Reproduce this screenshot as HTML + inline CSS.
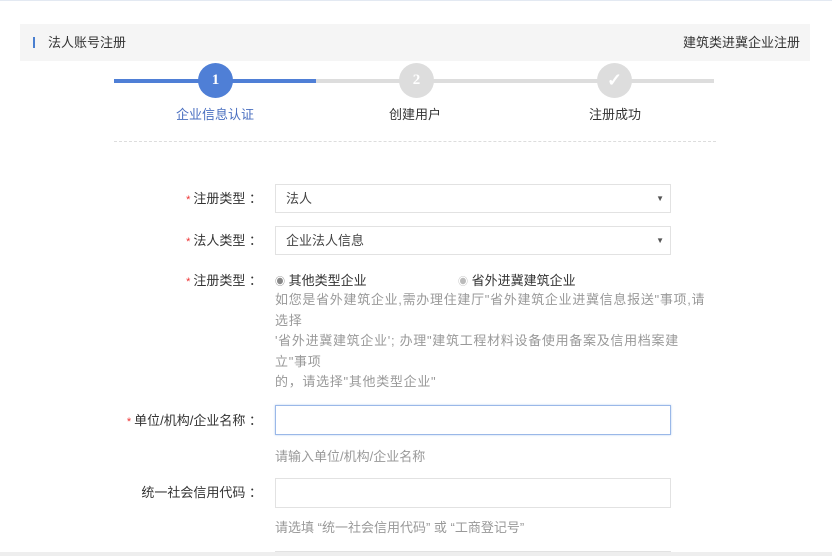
<!DOCTYPE html>
<html><head><meta charset="utf-8"><style>
*{margin:0;padding:0;box-sizing:border-box}
html,body{width:832px;height:556px;overflow:hidden}
body{background:#fff;font-family:"Liberation Sans","Noto Sans CJK SC",sans-serif;font-size:13px;color:#333;position:relative}
.frame{position:absolute;left:0;top:0;width:832px;height:556px;border-top:1px solid #e3e9f2;border-bottom:4px solid #eee;z-index:5}
.hdr{position:absolute;left:20px;top:24px;width:790px;height:37px;background:#f5f5f5}
.hdr .bar{position:absolute;left:13px;top:13px;width:2px;height:11px;background:#4a7fd0}
.hdr .t{position:absolute;left:28px;top:10px;line-height:17px}
.hdr .r{position:absolute;right:10px;top:10px;line-height:17px}
.ln{position:absolute;top:79px;height:4px}
.c{position:absolute;top:63px;width:35px;height:35px;border-radius:50%;background:#ddd;color:#fff;text-align:center;line-height:35px;font-weight:bold;font-size:15px;font-family:"Liberation Serif",serif}
.lab{position:absolute;top:106px;width:120px;text-align:center;line-height:18px}
.dash{position:absolute;left:114px;top:141px;width:602px;border-top:1px dashed #ddd}
.fl{position:absolute;right:570px;line-height:18px;color:#333;white-space:nowrap}
.fl i{color:#e33;font-style:normal;font-size:11px;margin-right:3px}
.sel{position:absolute;left:275px;width:396px;height:29px;border:1px solid #e2e2e2;padding-left:10px;line-height:27px;color:#444}
.sel:after{content:"▼";position:absolute;right:6px;top:0;font-size:8px;color:#555}
.inp{position:absolute;left:275px;width:396px;height:30px;border:1px solid #e2e2e2}
.hint{position:absolute;left:275px;color:#999;line-height:20px;white-space:nowrap}
</style></head><body>
<div class="frame"></div>
<div class="hdr"><div class="bar"></div><div class="t">法人账号注册</div><div class="r">建筑类进冀企业注册</div></div>
<div class="ln" style="left:114px;width:600px;background:#ddd"></div>
<div class="ln" style="left:114px;width:202px;background:#4f7fd6"></div>
<div class="c" style="left:198px;background:#4f7fd6">1</div>
<div class="c" style="left:399px">2</div>
<div class="c" style="left:597px;font-size:18px">✓</div>
<div class="lab" style="left:155px;color:#4a6fc0">企业信息认证</div>
<div class="lab" style="left:355px">创建用户</div>
<div class="lab" style="left:555px">注册成功</div>
<div class="dash"></div>
<div class="fl" style="top:190px"><i>*</i>注册类型 ：</div>
<div class="sel" style="top:184px">法人</div>
<div class="fl" style="top:232px"><i>*</i>法人类型 ：</div>
<div class="sel" style="top:226px">企业法人信息</div>
<div class="fl" style="top:272px"><i>*</i>注册类型 ：</div>
<div style="position:absolute;left:275px;top:272px;line-height:18px"><span style="color:#888;font-size:10px">◉</span> 其他类型企业</div>
<div style="position:absolute;left:458px;top:272px;line-height:18px"><span style="color:#bbb;font-size:10px">◉</span> 省外进冀建筑企业</div>
<div class="hint" style="top:290px;line-height:20.5px;letter-spacing:0.7px">如您是省外建筑企业,需办理住建厅"省外建筑企业进冀信息报送"事项,请<br>选择<br>'省外进冀建筑企业'; 办理"建筑工程材料设备使用备案及信用档案建<br>立"事项<br>的，请选择"其他类型企业"</div>
<div class="fl" style="top:412px"><i>*</i>单位/机构/企业名称 ：</div>
<div class="inp" style="top:405px;border-color:#9ab8e8;box-shadow:0 0 2px #b5cdf0"></div>
<div class="hint" style="top:447px">请输入单位/机构/企业名称</div>
<div class="fl" style="top:484px">统一社会信用代码 ：</div>
<div class="inp" style="top:478px"></div>
<div class="hint" style="top:518px">请选填 “统一社会信用代码” 或 “工商登记号”</div>
<div class="inp" style="top:551px;height:10px"></div>
</body></html>
